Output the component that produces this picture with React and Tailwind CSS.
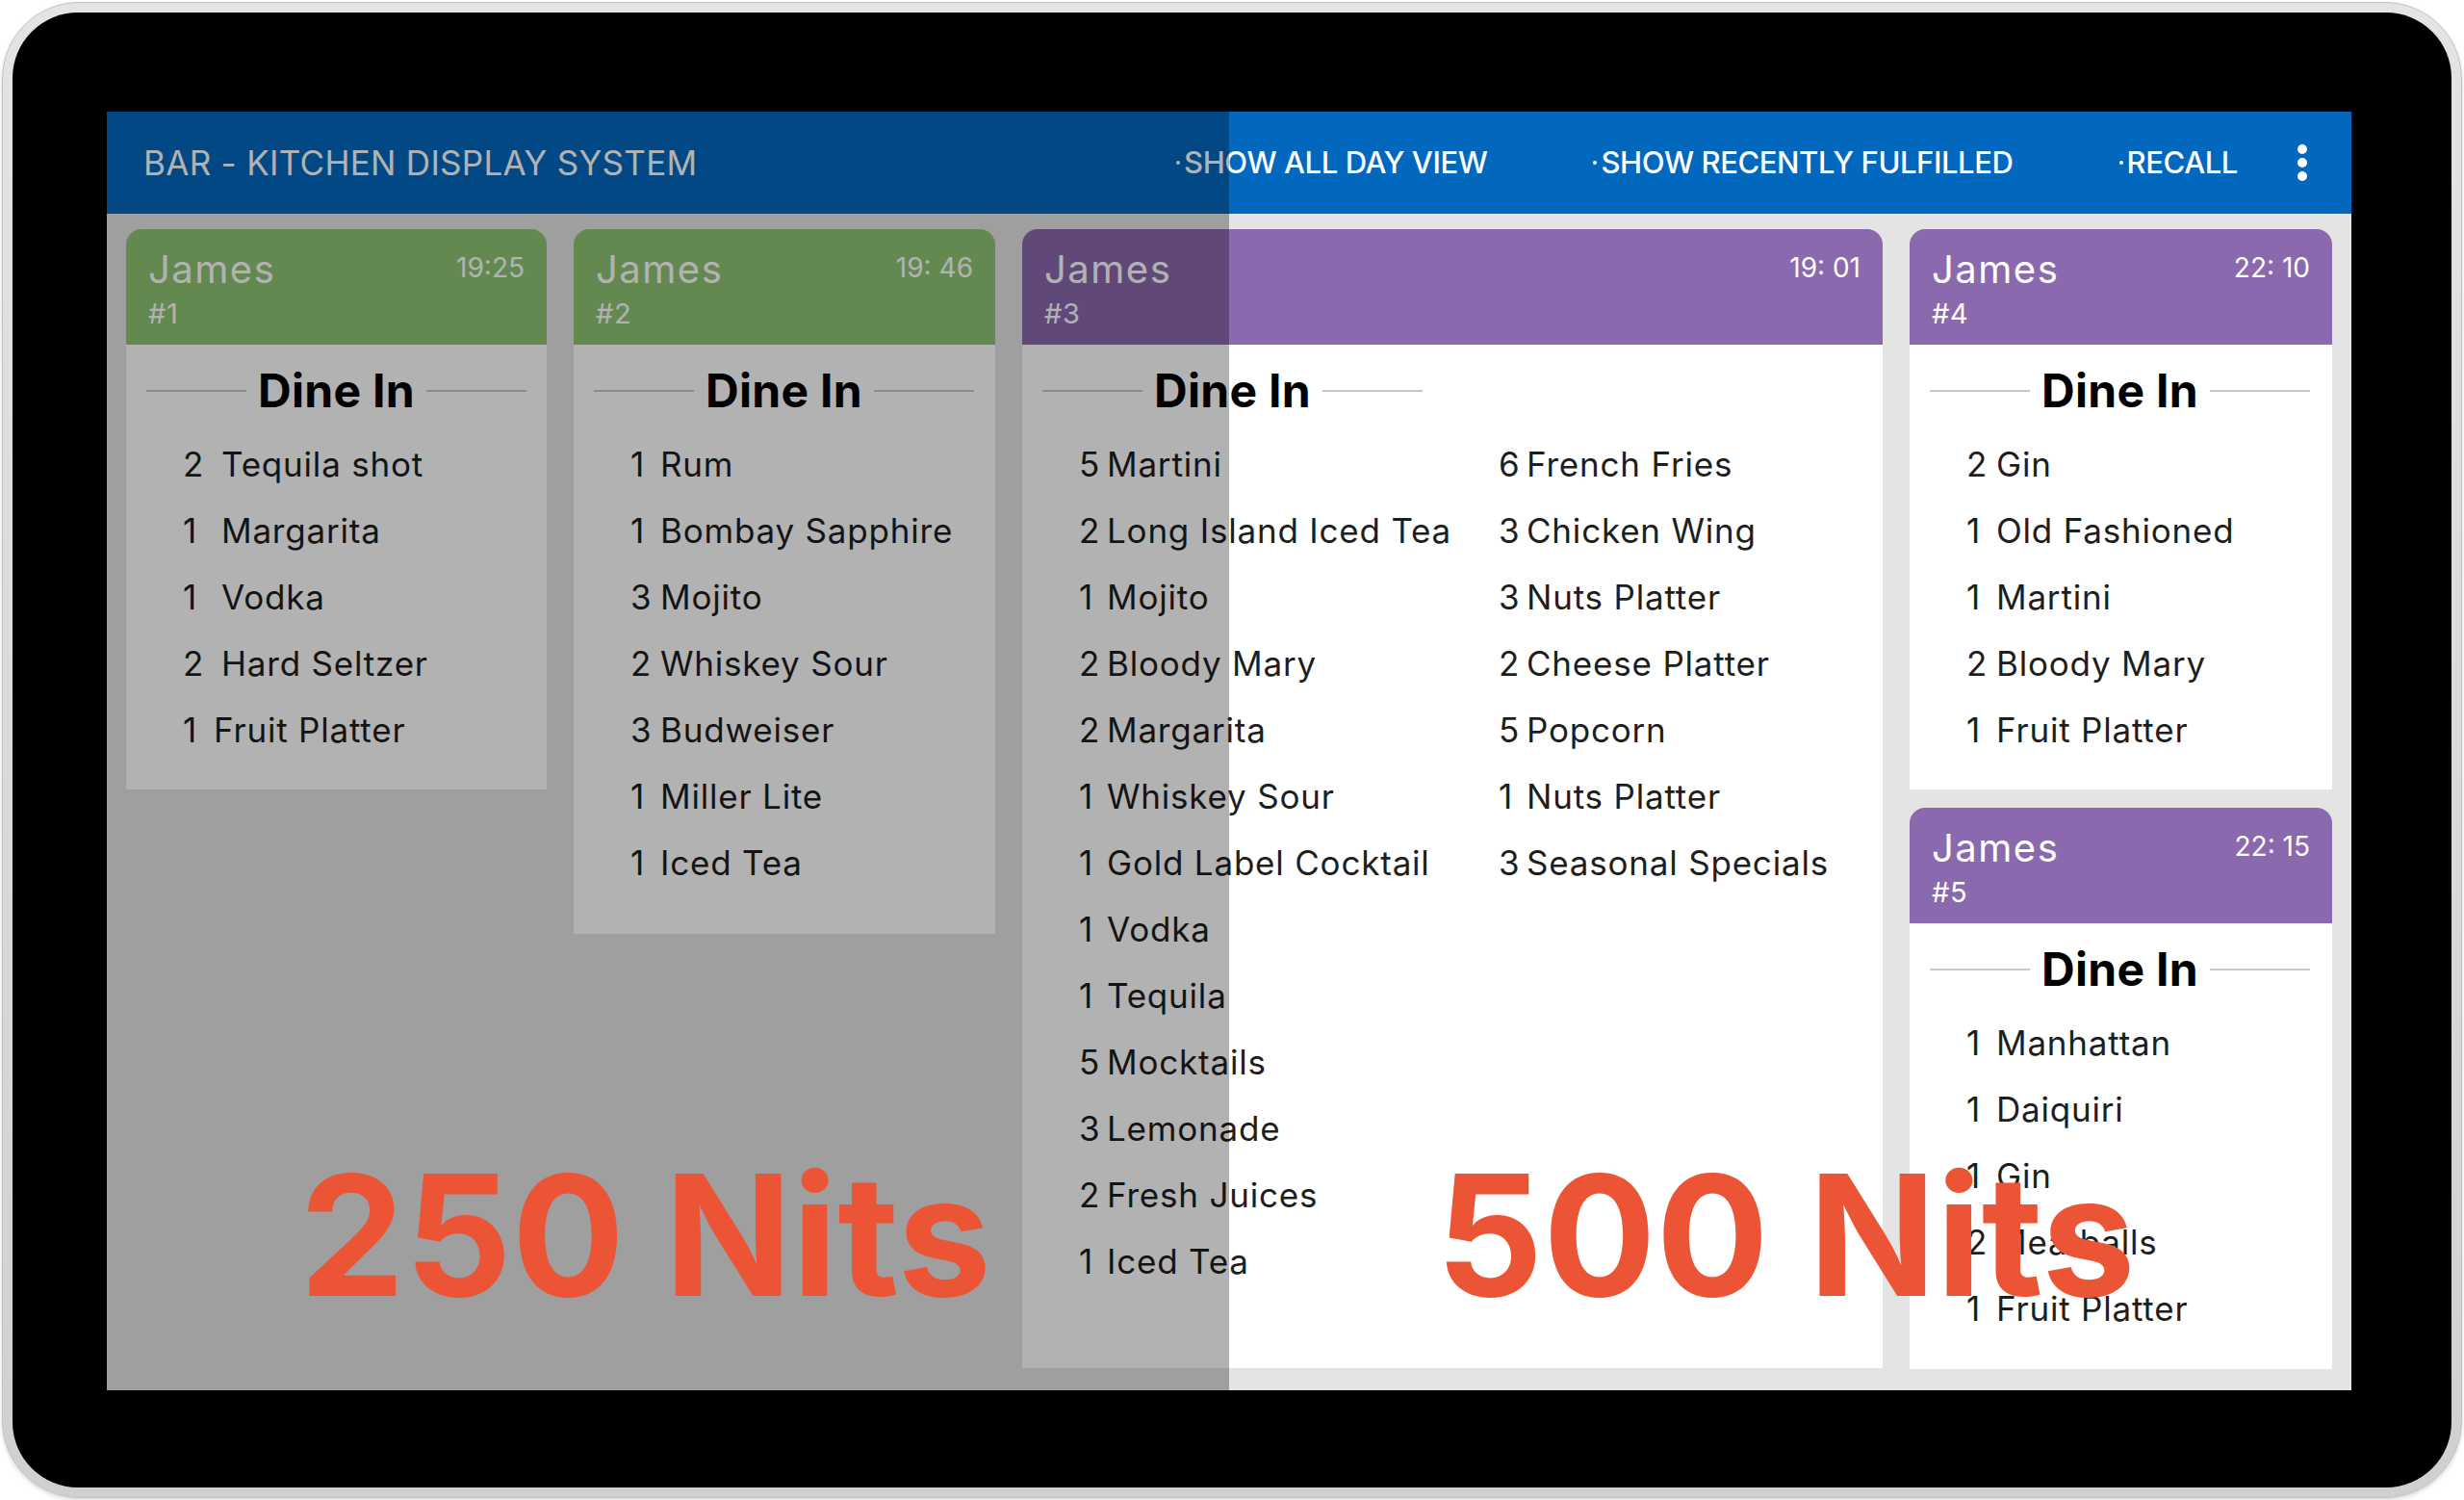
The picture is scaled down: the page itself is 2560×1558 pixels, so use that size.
import React from "react";

const FONT = { fontFamily: "Inter, 'Noto Sans', sans-serif" };

// tickets on the board, left to right
const tickets = [
  {
    no: 1,
    time: "19:25",
    tone: "green",
    height: "h-[582px]",
    width: "w-[437px]",
    items: [
      ["2", "Tequila shot", 40],
      ["1", "Margarita", 40],
      ["1", "Vodka", 40],
      ["2", "Hard Seltzer", 40],
      ["1", "Fruit Platter", 32],
    ],
  },
  {
    no: 2,
    time: "19: 46",
    tone: "green",
    height: "h-[732px]",
    width: "w-[438px]",
    items: [
      ["1", "Rum"],
      ["1", "Bombay Sapphire"],
      ["3", "Mojito"],
      ["2", "Whiskey Sour"],
      ["3", "Budweiser"],
      ["1", "Miller Lite"],
      ["1", "Iced Tea"],
    ],
  },
];

const bigTicket = {
  no: 3,
  time: "19: 01",
  left: [
    ["5", "Martini"],
    ["2", "Long Island Iced Tea"],
    ["1", "Mojito"],
    ["2", "Bloody Mary"],
    ["2", "Margarita"],
    ["1", "Whiskey Sour"],
    ["1", "Gold Label Cocktail"],
    ["1", "Vodka"],
    ["1", "Tequila"],
    ["5", "Mocktails"],
    ["3", "Lemonade"],
    ["2", "Fresh Juices"],
    ["1", "Iced Tea"],
  ],
  right: [
    ["6", "French Fries"],
    ["3", "Chicken Wing"],
    ["3", "Nuts Platter"],
    ["2", "Cheese Platter"],
    ["5", "Popcorn"],
    ["1", "Nuts Platter"],
    ["3", "Seasonal Specials"],
  ],
};

const sideTickets = [
  {
    no: 4,
    time: "22: 10",
    height: "h-[582px]",
    items: [
      ["2", "Gin"],
      ["1", "Old Fashioned"],
      ["1", "Martini"],
      ["2", "Bloody Mary"],
      ["1", "Fruit Platter"],
    ],
  },
  {
    no: 5,
    time: "22: 15",
    height: "h-[583px]",
    items: [
      ["1", "Manhattan"],
      ["1", "Daiquiri"],
      ["1", "Gin"],
      ["2", "Meatballs"],
      ["1", "Fruit Platter"],
    ],
  },
];

function TicketHeader({ no, time, tone }) {
  const bg = tone === "green" ? "bg-[#8ec574]" : "bg-[#8a69ae]";
  return (
    <div className={`${bg} h-[120px] shrink-0 rounded-t-[16px] px-[23px] pt-[20px] flex justify-between items-start text-white`}>
      <div>
        <div className="text-[40px] leading-[44px] tracking-[1.5px]">James</div>
        <div className="text-[29px] leading-[32px] mt-[8px] tracking-[0.5px]">#{no}</div>
      </div>
      <div className="text-[28px] leading-[32px] mt-[4px] whitespace-pre">{time}</div>
    </div>
  );
}

function DineIn() {
  return (
    <div className="w-[395px] h-[48px] flex items-center gap-[12px]">
      <div className="flex-1 h-[2px] bg-[#c8c8c8]" />
      <span className="text-[48px] leading-[48px] font-bold text-black tracking-[0.3px]">Dine In</span>
      <div className="flex-1 h-[2px] bg-[#c8c8c8]" />
    </div>
  );
}

function ItemRow({ qty, name, qtyW = 31 }) {
  return (
    <div className="h-[69px] flex items-center text-[35px] tracking-[0.8px] text-[#1e1e1e] whitespace-nowrap">
      <span className="shrink-0" style={{ width: qtyW }}>{qty}</span>
      <span>{name}</span>
    </div>
  );
}

function Ticket({ no, time, tone = "purple", height, width = "w-[439px]", items }) {
  return (
    <div className={`${width} ${height} flex flex-col`}>
      <TicketHeader no={no} time={time} tone={tone} />
      <div className="flex-1 bg-white pt-[24px] px-[21px]">
        <DineIn />
        <div className="mt-[18px] pl-[38px]">
          {items.map(([q, n, w], i) => (
            <ItemRow key={i} qty={q} name={n} qtyW={w} />
          ))}
        </div>
      </div>
    </div>
  );
}

function WideTicket() {
  const t = bigTicket;
  return (
    <div className="w-[894px] h-[1183px] flex flex-col">
      <TicketHeader no={t.no} time={t.time} tone="purple" />
      <div className="flex-1 bg-white pt-[24px] px-[21px]">
        <DineIn />
        <div className="mt-[18px] pl-[38px] grid grid-cols-[436px_1fr]">
          <div>
            {t.left.map(([q, n], i) => (
              <ItemRow key={i} qty={q} name={n} qtyW={29} />
            ))}
          </div>
          <div>
            {t.right.map(([q, n], i) => (
              <ItemRow key={i} qty={q} name={n} qtyW={29} />
            ))}
          </div>
        </div>
      </div>
    </div>
  );
}

function NavLink({ label }) {
  return (
    <div className="flex items-center">
      <span className="w-[4px] h-[4px] rounded-full bg-white mr-[4px]" />
      <span className="text-[31px] font-medium tracking-[-0.4px]">{label}</span>
    </div>
  );
}

function TopBar() {
  return (
    <div className="h-[106px] bg-[#0268be] flex items-center pl-[38px] pr-[46px] text-white">
      <div className="text-[35px] tracking-[0.3px]">BAR - KITCHEN DISPLAY SYSTEM</div>
      <div className="ml-auto flex items-center gap-[110px]">
        <NavLink label="SHOW ALL DAY VIEW" />
        <NavLink label="SHOW RECENTLY FULFILLED" />
        <NavLink label="RECALL" />
      </div>
      <div className="ml-[62px] flex flex-col gap-[4px]">
        <span className="w-[10px] h-[10px] rounded-full bg-white" />
        <span className="w-[10px] h-[10px] rounded-full bg-white" />
        <span className="w-[10px] h-[10px] rounded-full bg-white" />
      </div>
    </div>
  );
}

function NitsLabel({ text, left }) {
  return (
    <div
      className="absolute top-[1080px] text-[174px] leading-none font-bold text-[#eb5535] tracking-[0px] whitespace-nowrap"
      style={{ left }}
    >
      {text}
    </div>
  );
}

export default function App() {
  return (
    <div className="w-[2560px] h-[1558px] bg-white p-[2px]" style={FONT}>
      <div className="h-full rounded-[80px] bg-gradient-to-b from-[#e4e4e4] to-[#d0d0d0] border border-[#c2c2c2] p-[10px] shadow-[0_2px_4px_rgba(0,0,0,0.15)]">
        <div className="h-full rounded-[68px] bg-black pl-[98px] pt-[103px]">
          <div className="relative w-[2332px] h-[1328px] bg-[#e4e4e4] overflow-hidden">
            <TopBar />
            <div className="flex gap-[28px] px-[20px] pt-[16px]">
              {tickets.map((t) => (
                <Ticket key={t.no} {...t} />
              ))}
              <WideTicket />
              <div className="w-[439px] flex flex-col gap-[19px]">
                {sideTickets.map((t) => (
                  <Ticket key={t.no} {...t} />
                ))}
              </div>
            </div>

            {/* dimmed half of the panel */}
            <div className="absolute left-0 top-0 w-[1166px] h-full bg-black/30" />

            <NitsLabel text="250 Nits" left={200} />
            <NitsLabel text="500 Nits" left={1381} />
          </div>
        </div>
      </div>
    </div>
  );
}
